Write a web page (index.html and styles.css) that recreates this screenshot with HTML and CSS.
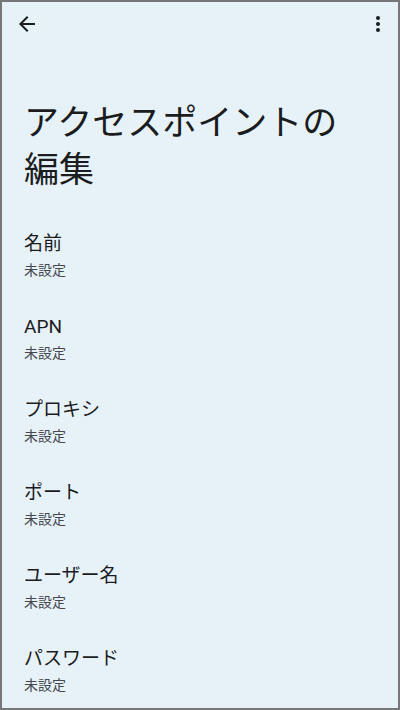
FILE: index.html
```html
<!DOCTYPE html>
<html lang="ja">
<head>
<meta charset="utf-8">
<link rel="stylesheet" href="styles.css">
</head>
<body>
<div class="frame">
  <div class="toolbar">
    <svg class="icon" width="24" height="24" viewBox="0 0 24 24"><path d="M20 11H7.83l5.59-5.59L12 4l-8 8 8 8 1.41-1.41L7.83 13H20v-2z" fill="#1b1c1e"/></svg>
    <svg class="icon" width="24" height="24" viewBox="0 0 24 24"><circle cx="12" cy="6" r="2" fill="#1b1c1e"/><circle cx="12" cy="12" r="2" fill="#1b1c1e"/><circle cx="12" cy="18" r="2" fill="#1b1c1e"/></svg>
  </div>
  <h1 class="title">アクセスポイントの編集</h1>
  <div class="list">
    <div class="item"><div class="label">名前</div><div class="value">未設定</div></div>
    <div class="item"><div class="label">APN</div><div class="value">未設定</div></div>
    <div class="item"><div class="label">プロキシ</div><div class="value">未設定</div></div>
    <div class="item"><div class="label">ポート</div><div class="value">未設定</div></div>
    <div class="item"><div class="label">ユーザー名</div><div class="value">未設定</div></div>
    <div class="item"><div class="label">パスワード</div><div class="value">未設定</div></div>
  </div>
</div>
</body>
</html>
```
FILE: styles.css
```css
html, body { margin: 0; padding: 0; }
body {
  font-family: Roboto, "Noto Sans CJK JP", sans-serif;
  color: #1b1c1e;
}
.frame {
  width: 400px;
  height: 710px;
  box-sizing: border-box;
  border: 2px solid #777777;
  background: #e7f2f8;
  overflow: hidden;
}
.toolbar {
  display: flex;
  justify-content: space-between;
  align-items: center;
  height: 44px;
  padding: 0 8px 0 13px;
}
.icon { display: block; }
.title {
  margin: 54px 0 0 0;
  padding: 0 30px 0 22px;
  font-size: 35px;
  font-weight: 400;
  line-height: 47px;
}
.list {
  margin-top: 36px;
  padding: 0 22px;
}
.item {
  height: 83px;
}
.label {
  font-size: 19px;
  line-height: 28px;
}
.value {
  margin-top: 2px;
  font-size: 14px;
  line-height: 20px;
  color: #44474e;
}
```
